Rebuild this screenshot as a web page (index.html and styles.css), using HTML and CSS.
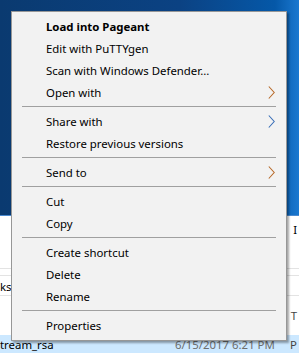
FILE: index.html
```html
<!DOCTYPE html>
<html lang="en">
<head>
    <meta charset="UTF-8">
    <title>Context Menu</title>
    <link rel="stylesheet" href="styles.css">
</head>
<body>
    <div class="desktop"></div>
    <div class="explorer">
        <div class="row row-head"><span></span><span class="right-text">I</span></div>
        <div class="row row-thin"></div>
        <div class="row row-mid"><span>ks</span><span></span></div>
        <div class="row row-tall"><span></span><span class="right-text grey">T</span></div>
        <div class="row row-selected">
            <span>tream_rsa</span>
            <span class="date">6/15/2017 6:21 PM</span>
            <span class="right-text grey">P</span>
        </div>
    </div>

    <ul class="menu">
        <li class="item bold">Load into Pageant</li>
        <li class="item">Edit with PuTTYgen</li>
        <li class="item">Scan with Windows Defender...</li>
        <li class="item">Open with
            <svg class="arrow" width="7" height="13" viewBox="0 0 7 13"><path d="M0.8 0.5 L6.2 6.5 L0.8 12.5" fill="none" stroke="#b86a2a" stroke-width="1.1"/></svg>
        </li>
        <li class="separator"></li>
        <li class="item">Share with
            <svg class="arrow" width="7" height="13" viewBox="0 0 7 13"><path d="M0.8 0.5 L6.2 6.5 L0.8 12.5" fill="none" stroke="#3a6fb8" stroke-width="1.1"/></svg>
        </li>
        <li class="item">Restore previous versions</li>
        <li class="separator"></li>
        <li class="item">Send to
            <svg class="arrow" width="7" height="13" viewBox="0 0 7 13"><path d="M0.8 0.5 L6.2 6.5 L0.8 12.5" fill="none" stroke="#b86a2a" stroke-width="1.1"/></svg>
        </li>
        <li class="separator"></li>
        <li class="item">Cut</li>
        <li class="item">Copy</li>
        <li class="separator"></li>
        <li class="item">Create shortcut</li>
        <li class="item">Delete</li>
        <li class="item">Rename</li>
        <li class="separator"></li>
        <li class="item">Properties</li>
    </ul>
</body>
</html>
```

FILE: styles.css
```css
body {
    margin: 0;
    width: 299px;
    height: 353px;
    overflow: hidden;
    position: relative;
    font-family: "Noto Sans", "Open Sans", sans-serif;
    font-size: 11.4px;
    color: #000;
    background-color: #fff;
}
.desktop {
    height: 215px;
    background: linear-gradient(90deg, #0a3a70 0%, #0b4283 60%, #0558a8 92%, #1a78d0 100%);
    border-bottom: 1px solid #4a8ad0;
}
.explorer {
    display: flex;
    flex-direction: column;
    background-color: #fff;
}
.row {
    display: flex;
    justify-content: space-between;
    align-items: center;
    padding: 0 2px 0 0;
    border-bottom: 1px solid #e3e3e3;
}
.row-head {
    box-sizing: border-box;
    height: 53px;
    align-items: flex-start;
    padding-top: 6px;
}
.row-thin {
    height: 6px;
}
.row-mid {
    height: 20px;
    padding-top: 2px;
    box-sizing: border-box;
}
.row-tall {
    height: 39px;
    border-bottom: none;
}
.row-selected {
    height: 22px;
    align-items: flex-start;
    padding-top: 2px;
    box-sizing: border-box;
    background-color: #cce8ff;
    border-bottom: none;
    position: relative;
}
.right-text {
    margin-left: auto;
}
.grey {
    color: #444;
}
.date {
    position: absolute;
    left: 175px;
    color: #6d6d6d;
}
.menu {
    position: absolute;
    left: 11px;
    top: 11px;
    width: 274px;
    margin: 0;
    padding: 3px 0 4px;
    list-style: none;
    background-color: #f2f2f2;
    border: 1px solid #979797;
    box-shadow: 2px 2px 2px rgba(0, 0, 0, 0.35);
}
.item {
    height: 22px;
    line-height: 24px;
    padding-left: 34px;
    position: relative;
    white-space: nowrap;
}
.bold {
    font-weight: bold;
}
.arrow {
    position: absolute;
    right: 11px;
    top: 5px;
}
.separator {
    height: 1px;
    margin: 3px 10px;
    background-color: #a0a0a0;
}
```
